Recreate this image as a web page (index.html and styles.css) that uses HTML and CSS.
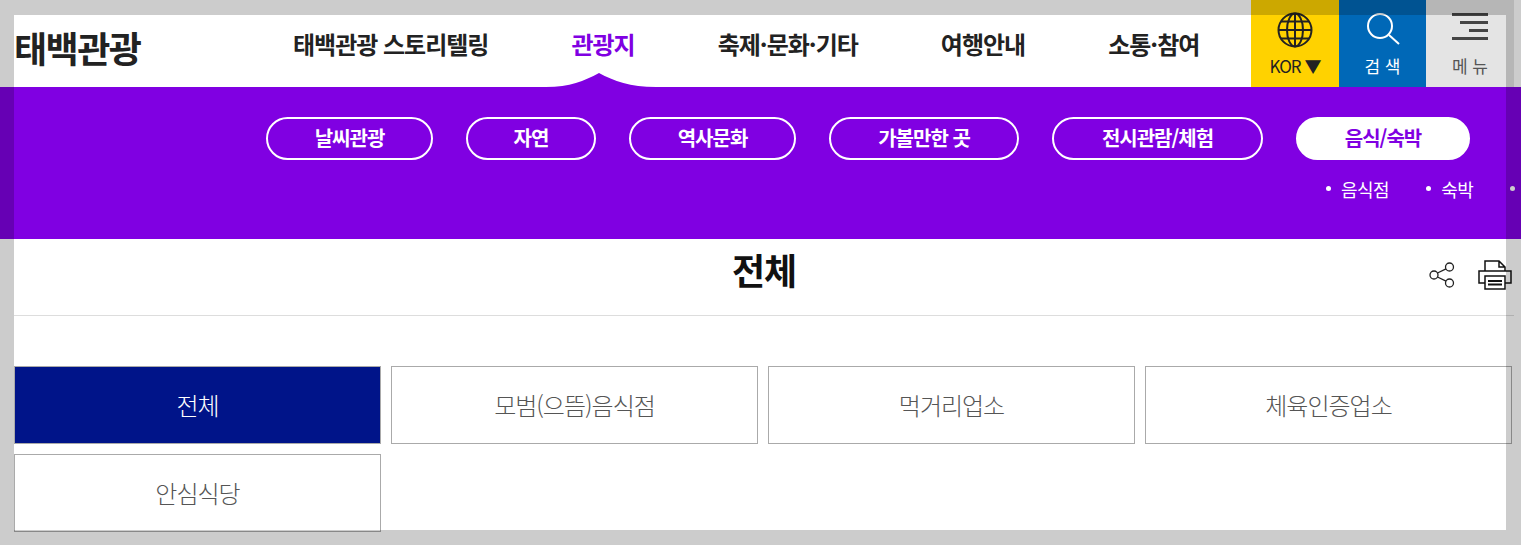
FILE: index.html
```html
<!DOCTYPE html>
<html lang="ko">
<head>
    <meta charset="UTF-8">
    <meta name="viewport" content="width=device-width, initial-scale=1.0">
    <title>태백관광 - 음식/숙박</title>
    <link rel="stylesheet" href="styles.css">
</head>
<body>
    <!-- Header -->
    <header class="header">
        <h1 class="logo">태백관광</h1>
        <nav class="gnb">
            <a class="gnb-item">태백관광 스토리텔링</a>
            <a class="gnb-item active">
                관광지
                <svg class="gnb-notch" width="110" height="14" viewBox="0 0 110 14"><path d="M0 14C24 14 38 8 53 0C68 8 84 14 110 14Z"/></svg>
            </a>
            <a class="gnb-item">축제·문화·기타</a>
            <a class="gnb-item">여행안내</a>
            <a class="gnb-item">소통·참여</a>
        </nav>
        <div class="util">
            <a class="util-btn lang">
                <svg width="36" height="36" viewBox="0 0 36 36" fill="none" stroke="#222" stroke-width="2">
                    <circle cx="18" cy="18" r="16.5"/>
                    <ellipse cx="18" cy="18" rx="8" ry="16.5"/>
                    <path d="M18 1.5V34.500M1.500 18H34.500M4 9.500H32M4 26.500H32"/>
                </svg>
                <span>KOR ▼</span>
            </a>
            <a class="util-btn search">
                <svg width="36" height="36" viewBox="0 0 36 36" fill="none" stroke="#fff" stroke-width="2">
                    <circle cx="15" cy="14" r="12"/>
                    <path d="M24 23L34 32"/>
                </svg>
                <span>검 색</span>
            </a>
            <a class="util-btn menu">
                <span class="menu-lines">
                    <i class="line-long"></i>
                    <i class="line-mid"></i>
                    <i class="line-short"></i>
                    <i class="line-long"></i>
                </span>
                <span>메 뉴</span>
            </a>
        </div>
    </header>

    <!-- Sub navigation -->
    <div class="subnav">
        <div class="pills">
            <a class="pill w-weather">날씨관광</a>
            <a class="pill w-nature">자연</a>
            <a class="pill w-history">역사문화</a>
            <a class="pill w-place">가볼만한 곳</a>
            <a class="pill w-show">전시관람/체험</a>
            <a class="pill w-food on">음식/숙박</a>
        </div>
        <ul class="depth3">
            <li>음식점</li>
            <li>숙박</li>
            <li>&nbsp;</li>
        </ul>
    </div>

    <!-- Title -->
    <div class="title-row">
        <h2>전체</h2>
        <div class="title-tools">
            <svg width="28" height="28" viewBox="0 0 28 28" fill="none" stroke="#222" stroke-width="1.300">
                <circle cx="6" cy="14" r="4"/>
                <circle cx="21.500" cy="6" r="4"/>
                <circle cx="21.500" cy="22" r="4"/>
                <path d="M9.500 12L18 7.800M9.500 16L18 20.200"/>
            </svg>
            <svg width="34" height="32" viewBox="0 0 34 32" fill="none" stroke="#111" stroke-width="1.500">
                <path d="M7 12V2H21L27 8V12M21 2V8H27"/>
                <path d="M7 24H1V12H33V24H27"/>
                <rect x="7" y="17" width="20" height="13" fill="#fff"/>
                <path d="M10 22H24M10 25.500H24" stroke-width="1.800"/>
            </svg>
        </div>
    </div>

    <!-- Category tabs -->
    <div class="tabs">
        <a class="tab on">전체</a>
        <a class="tab">모범(으뜸)음식점</a>
        <a class="tab">먹거리업소</a>
        <a class="tab">체육인증업소</a>
        <a class="tab">안심식당</a>
    </div>

    <div class="dim"></div>
</body>
</html>
```

FILE: styles.css
```css
* {
    margin: 0;
    padding: 0;
    box-sizing: border-box;
    font-family: 'Noto Sans CJK KR', 'Noto Sans', sans-serif;
}

html, body {
    height: 545px;
    overflow: hidden;
    background: #fff;
}

ul {
    list-style: none;
}

.header {
    display: flex;
    width: 1514px;
    height: 87px;
    padding-left: 14px;
}

.logo {
    width: 279px;
    font-size: 36px;
    font-weight: 700;
    line-height: 94px;
    letter-spacing: -1.5px;
    color: #222;
}

.gnb {
    display: flex;
    flex: 1;
    gap: 83px;
}

.gnb-item {
    position: relative;
    font-size: 24px;
    font-weight: 700;
    line-height: 87px;
    letter-spacing: -1px;
    color: #222;
    white-space: nowrap;
}

.gnb-item.active {
    color: #8000e2;
}

.gnb-notch {
    position: absolute;
    left: -25px;
    bottom: 0;
    fill: #8000e2;
}

.util {
    display: flex;
}

.util-btn {
    display: flex;
    flex-direction: column;
    align-items: center;
    height: 87px;
    padding-top: 12px;
    font-size: 17px;
    line-height: 24px;
}

.util-btn svg {
    display: block;
}

.util-btn span:last-child {
    margin-top: 6px;
}

.lang {
    width: 88px;
    background: #ffd200;
    color: #222;
    letter-spacing: -1px;
}

.search {
    width: 87px;
    background: #0068b7;
    color: #fff;
}

.menu {
    width: 88px;
    background: #e4e4e4;
    color: #555;
}

.menu-lines {
    display: flex;
    flex-direction: column;
    align-items: flex-end;
    gap: 5px;
    width: 36px;
    height: 36px;
    padding-top: 1px;
}

.menu-lines i {
    height: 3px;
    background: #444;
}

.line-long {
    width: 36px;
}

.line-mid {
    width: 28px;
}

.line-short {
    width: 19px;
}

.subnav {
    width: 100%;
    height: 152px;
    background: #8000e2;
    overflow: hidden;
}

.pills {
    display: flex;
    gap: 33px;
    padding: 30px 0 0 266px;
}

.pill {
    height: 43px;
    border: 2px solid #fff;
    border-radius: 22px;
    font-size: 20px;
    font-weight: 700;
    line-height: 38px;
    letter-spacing: -1px;
    text-align: center;
    color: #fff;
    white-space: nowrap;
}

.pill.on {
    background: #fff;
    color: #8000e2;
}

.w-weather { width: 167px; }
.w-nature { width: 130px; }
.w-history { width: 167px; }
.w-place { width: 190px; }
.w-show { width: 211px; }
.w-food { width: 174px; }

.depth3 {
    display: flex;
    gap: 37px;
    padding: 15px 0 0 1326px;
    color: #fff;
    font-size: 18px;
    line-height: 28px;
    letter-spacing: -0.5px;
    white-space: nowrap;
}

.depth3 li {
    position: relative;
    padding-left: 15px;
}

.depth3 li::before {
    content: '';
    position: absolute;
    left: 0;
    top: 11px;
    width: 5px;
    height: 5px;
    border-radius: 50%;
    background: #fff;
}

.title-row {
    position: relative;
    width: 1500px;
    height: 77px;
    margin-left: 14px;
    border-bottom: 1px solid #ddd;
    text-align: center;
}

.title-row h2 {
    font-size: 36px;
    font-weight: 700;
    line-height: 60px;
    letter-spacing: -1px;
    color: #111;
}

.title-tools {
    position: absolute;
    top: 20px;
    right: 2px;
    display: flex;
    align-items: center;
    gap: 22px;
}

.tabs {
    display: grid;
    grid-template-columns: repeat(4, 367px);
    grid-auto-rows: 78px;
    gap: 10px;
    margin: 50px 0 0 14px;
}

.tab {
    border: 1px solid #aaa;
    font-size: 24px;
    font-weight: 300;
    line-height: 76px;
    letter-spacing: -1px;
    text-align: center;
    color: #555;
}

.tab.on {
    background: #001489;
    color: #fff;
}

/* dim frame around the capture area */
.dim {
    position: absolute;
    top: 15px;
    left: 14px;
    width: 1492px;
    height: 515px;
    box-shadow: 0 0 0 1600px rgba(0, 0, 0, 0.2);
    pointer-events: none;
}
```
